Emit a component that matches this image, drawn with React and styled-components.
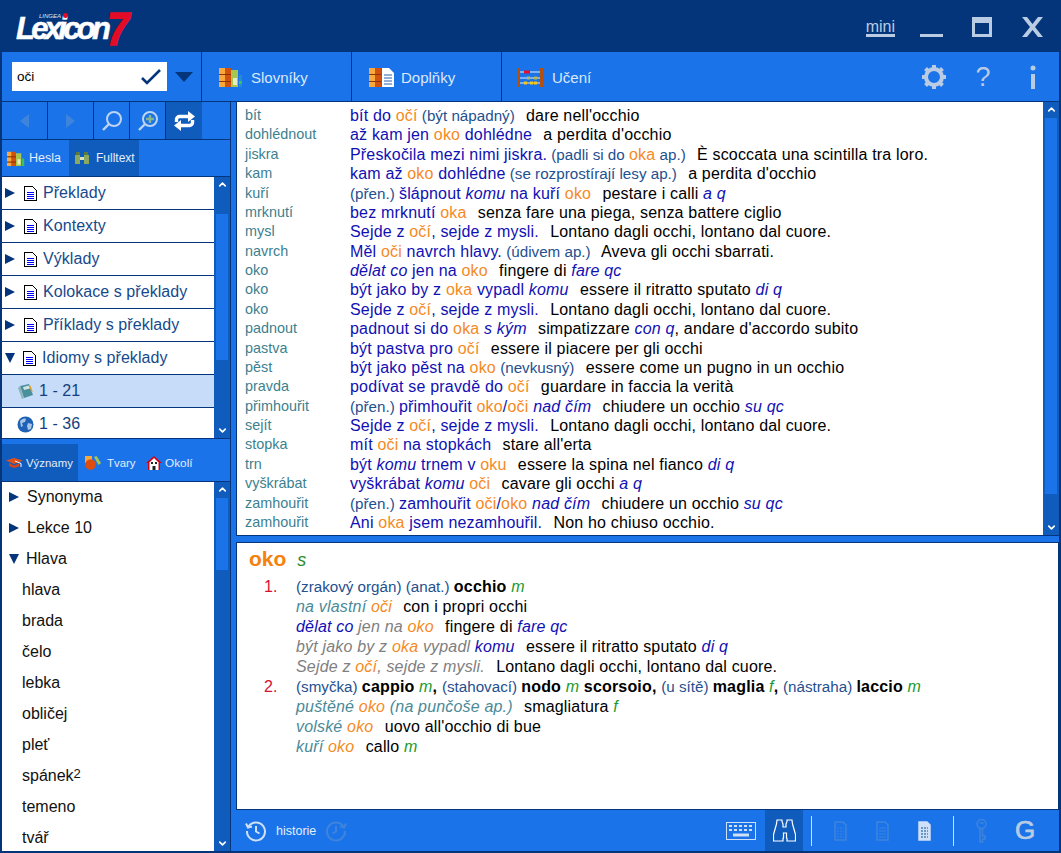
import React from "react";
import styled, { createGlobalStyle } from "styled-components";
import { FiChevronUp, FiChevronDown } from "react-icons/fi";

const NAVY = "#04357a";
const BLUE = "#1a73e8";
const ACTIVE = "#0f5cbd";
const PALE = "#b9cce4";

const GlobalStyle = createGlobalStyle`
  html, body {
    margin: 0;
    padding: 0;
    background: ${NAVY};
  }
  body {
    font-family: "Liberation Sans", Arial, sans-serif;
    overflow: hidden;
  }
`;

const Window = styled.div`
  width: 1061px;
  height: 853px;
  box-sizing: border-box;
  padding: 0 2px 2px;
  background: ${NAVY};
  display: flex;
  flex-direction: column;
`;

const TitleBar = styled.div`
  height: 52px;
  flex: none;
  display: flex;
  align-items: flex-start;
  justify-content: space-between;
`;

const Logo = styled.div`
  position: relative;
  margin: 11px 0 0 14px;
  padding-top: 9px;
  width: 116px;
  height: 18px;
  color: #fff;
  font: italic bold 31px/18px "Liberation Sans", sans-serif;
  letter-spacing: -3.7px;
  -webkit-text-stroke: 0.5px #fff;
`;

const LogoSmall = styled.span`
  position: absolute;
  left: 23px;
  top: 2px;
  font: italic 400 6px/7px "Liberation Sans", sans-serif;
  letter-spacing: 0;
  color: #dfe7f2;
  -webkit-text-stroke: 0;
`;

const LogoDot = styled.span`
  position: absolute;
  left: 47px;
  top: 2px;
  width: 5px;
  height: 5px;
  border-radius: 50%;
  background: #e30b25;
`;

const LogoSeven = styled.span`
  position: absolute;
  left: 91px;
  top: -2px;
  color: #e30b25;
  font: italic 900 47px/40px "Liberation Sans", sans-serif;
  letter-spacing: 0;
  -webkit-text-stroke: 1.5px #e30b25;
  transform: scaleX(0.85);
  transform-origin: left center;
`;

const WindowButtons = styled.div`
  display: flex;
  align-items: center;
  height: 52px;
  padding-top: 3px;
  box-sizing: border-box;
  margin-right: 15px;
  gap: 24px;
`;

const MiniLink = styled.span`
  color: ${PALE};
  font-size: 16px;
  border-bottom: 3px solid ${PALE};
  line-height: 15px;
  margin-right: -1px;
`;

const WinIcon = styled.svg`
  width: 24px;
  height: 24px;
  flex: none;
  margin-left: 2px;
  fill: ${PALE};
`;

const Toolbar = styled.div`
  height: 50px;
  flex: none;
  display: flex;
  box-sizing: border-box;
  background: ${BLUE};
  border-bottom: 1px solid ${NAVY};
`;

const SearchZone = styled.div`
  width: 200px;
  flex: none;
  display: flex;
  align-items: center;
  padding-left: 10px;
  box-sizing: border-box;
  border-right: 1px solid ${NAVY};
  gap: 8px;
`;

const SearchBox = styled.div`
  width: 155px;
  height: 29px;
  background: #fff;
  display: flex;
  align-items: center;
  justify-content: space-between;
  box-sizing: border-box;
  padding: 0 6px 0 5px;
  font-size: 13.5px;
  color: #000;
`;

const ToolTab = styled.div`
  width: 150px;
  box-sizing: border-box;
  border-right: ${(p) => (p.$last ? "none" : `1px solid ${NAVY}`)};
  display: flex;
  align-items: center;
  gap: ${(p) => p.$gap}px;
  padding: 1px 0 0 ${(p) => p.$pad}px;
  color: #dce8fa;
  font-size: 15px;
`;

const ToolSpacer = styled.div`
  flex: 1;
  display: flex;
  align-items: center;
  justify-content: flex-end;
  gap: 22px;
  padding-right: 12px;
`;

const Body = styled.div`
  flex: 1;
  min-height: 0;
  display: flex;
  background: ${BLUE};
`;

const LeftColumn = styled.div`
  width: 229px;
  flex: none;
  display: flex;
  flex-direction: column;
  border-right: 1px solid ${NAVY};
  box-sizing: border-box;
`;

const NavRow = styled.div`
  height: 38px;
  flex: none;
  display: flex;
  border-bottom: 1px solid ${NAVY};
  box-sizing: border-box;
`;

const NavCell = styled.div`
  width: ${(p) => p.$w}px;
  flex: none;
  box-sizing: border-box;
  display: flex;
  align-items: center;
  justify-content: center;
  border-right: ${(p) => (p.$plain ? "none" : `1px solid ${NAVY}`)};
  background: ${(p) => (p.$active ? ACTIVE : "transparent")};
`;

const SmallTabs = styled.div`
  flex: none;
  height: ${(p) => p.$h}px;
  display: flex;
  padding-top: ${(p) => p.$top || 0}px;
  box-sizing: border-box;
  border-bottom: 1px solid ${NAVY};
`;

const SmallTab = styled.div`
  box-sizing: border-box;
  width: ${(p) => p.$w}px;
  display: flex;
  align-items: center;
  padding-left: ${(p) => p.$pad}px;
  gap: ${(p) => p.$gap}px;
  color: #e4eefc;
  font-size: ${(p) => p.$size || 12}px;
  background: ${(p) => (p.$active ? ACTIVE : "transparent")};
`;

const ListWrap = styled.div`
  display: flex;
  min-height: 0;
  flex: ${(p) => (p.$grow ? 1 : "none")};
  height: ${(p) => (p.$h ? `${p.$h}px` : "auto")};
  border-bottom: ${(p) => (p.$grow ? "none" : `1px solid ${NAVY}`)};
  box-sizing: border-box;
`;

const List = styled.div`
  flex: 1;
  min-width: 0;
  background: #fff;
  overflow: hidden;
`;

const TreeRow = styled.div`
  height: 33px;
  box-sizing: border-box;
  border-bottom: 1px solid ${NAVY};
  display: flex;
  align-items: center;
  gap: ${(p) => p.$gap || 6}px;
  padding-left: ${(p) => p.$pad || 3}px;
  font-size: 16px;
  letter-spacing: 0.06px;
  color: ${(p) => (p.$sub ? "#143f7c" : "#174a8c")};
  background: ${(p) => (p.$selected ? "#c7dcf8" : "#fff")};
`;

const PlainRow = styled.div`
  height: 31px;
  display: flex;
  align-items: center;
  gap: 7px;
  padding-left: ${(p) => p.$pad}px;
  font-size: 16px;
  color: #111;

  &:first-child {
    height: 30px;
  }
`;

const Sup = styled.span`
  font-size: 13px;
  margin: -5px 0 0 -7px;
`;

const Triangle = styled.span`
  flex: none;
  width: 0;
  height: 0;
  ${(p) =>
    p.$open
      ? `border-left: 5.5px solid transparent; border-right: 5.5px solid transparent; border-top: 10px solid ${NAVY};`
      : `border-top: 5.5px solid transparent; border-bottom: 5.5px solid transparent; border-left: 10px solid ${NAVY}; margin-right: 1px;`}
`;

const ScrollTrack = styled.div`
  width: 16px;
  flex: none;
  display: flex;
  flex-direction: column;
  background: ${ACTIVE};
`;

const ScrollEnd = styled.div`
  height: 15px;
  flex: none;
  display: flex;
  align-items: center;
  justify-content: center;
  color: #fff;
`;

const ScrollThumbArea = styled.div`
  flex: 1;
  padding: ${(p) => p.$top || 1}px 2px 0;
`;

const ScrollThumb = styled.div`
  height: ${(p) => p.$h}px;
  background: ${BLUE};
`;

const RightColumn = styled.div`
  flex: 1;
  min-width: 0;
  display: flex;
  flex-direction: column;
  padding-left: 5px;
`;

const ResultsWrap = styled.div`
  height: 434px;
  flex: none;
  display: flex;
  box-sizing: border-box;
  border: 1px solid ${NAVY};
  border-top: none;
  border-right: none;
`;

const Results = styled.div`
  flex: 1;
  min-width: 0;
  background: #fff;
  padding: 4px 0 0 8px;
  overflow: hidden;
`;

const ResultRow = styled.div`
  display: flex;
  height: 19.38px;
  line-height: 19.38px;
  font-size: 16px;
  letter-spacing: 0.18px;
  white-space: pre;
`;

const Head = styled.div`
  width: 105px;
  flex: none;
  color: #3d7f8f;
  font-size: 14.4px;
  letter-spacing: 0;
`;

const Run = styled.span`
  color: ${(p) => p.$color};
  font-style: ${(p) => (p.$italic ? "italic" : "normal")};
  font-weight: ${(p) => (p.$bold ? 700 : 400)};
  font-size: ${(p) => (p.$small ? "15.2px" : "inherit")};
  letter-spacing: ${(p) => (p.$small ? "0" : "inherit")};
  margin-left: ${(p) => (p.$lead ? "2px" : "0")};
`;

const Detail = styled.div`
  flex: 1;
  min-height: 0;
  margin-top: 6px;
  background: #fff;
  border: 1px solid ${NAVY};
  box-sizing: border-box;
  padding: 4px 0 0 12px;
`;

const DetailTitle = styled.div`
  height: 30px;
  line-height: 24px;
  font-size: 21px;
  font-weight: 700;
  color: #f5810f;
  white-space: pre;
`;

const TitleGender = styled.span`
  font-size: 18px;
  font-weight: 400;
  font-style: italic;
  color: #2d8a2d;
  margin-left: 5px;
`;

const Sense = styled.div`
  display: flex;
  padding-left: 15px;
`;

const SenseNumber = styled.div`
  width: 32px;
  flex: none;
  color: #d81034;
  font-size: 16px;
  line-height: 20px;
`;

const SenseLine = styled.div`
  height: 20px;
  line-height: 20px;
  font-size: 16px;
  letter-spacing: 0.18px;
  white-space: pre;
`;

const BottomBar = styled.div`
  height: 41px;
  flex: none;
  display: flex;
  align-items: stretch;
  justify-content: space-between;
`;

const BottomGroup = styled.div`
  display: flex;
  align-items: center;
`;

const HistoryLabel = styled.span`
  color: #e4eefc;
  font-size: 12.5px;
  margin: 0 9px 0 1px;
`;

const BottomCell = styled.div`
  width: ${(p) => p.$w}px;
  height: 100%;
  flex: none;
  box-sizing: border-box;
  padding-right: ${(p) => p.$pr || 0}px;
  display: flex;
  align-items: center;
  justify-content: center;
  background: ${(p) => (p.$active ? ACTIVE : "transparent")};
`;

const Separator = styled.div`
  width: 1px;
  height: 30px;
  background: #cfe0f7;
  flex: none;
`;

const GLetter = styled.span`
  color: ${PALE};
  font-size: 26px;
  -webkit-text-stroke: 0.7px ${PALE};
`;

const HelpGlyph = styled.span`
  color: ${PALE};
  font-size: 27px;
  width: 28px;
  text-align: center;
  line-height: 30px;
`;

const DocSvg = styled.svg`
  flex: none;
  margin-left: 2px;
  shape-rendering: crispEdges;
`;

const BookStack = () => (
  <svg width="23" height="19" viewBox="0 0 23 19">
    <rect x="0" y="0" width="6" height="19" fill="#f9a83b" />
    <rect x="6" y="0" width="6" height="19" fill="#d1510f" />
    <rect x="0" y="6" width="12" height="1" fill="#8c3408" />
    <rect x="0" y="13" width="12" height="1" fill="#8c3408" />
    <rect x="12" y="2" width="7" height="17" fill="#a8c64e" />
    <rect x="14" y="10" width="4" height="7" fill="#e6ecc0" />
    <rect x="20" y="7" width="3" height="12" fill="#1f8fd0" />
    <rect x="20" y="13" width="3" height="3" fill="#3ec05a" />
  </svg>
);

const BookDoc = () => (
  <svg width="25" height="19" viewBox="0 0 25 19">
    <rect x="0" y="0" width="6" height="19" fill="#f9a83b" />
    <rect x="6" y="0" width="6" height="19" fill="#d1510f" />
    <rect x="0" y="6" width="12" height="1" fill="#8c3408" />
    <rect x="0" y="13" width="12" height="1" fill="#8c3408" />
    <path d="M13 0h7l5 5v14H13z" fill="#fff" />
    <path d="M15 7h8M15 10h8M15 13h8M15 16h8" stroke="#2a5fb0" strokeWidth="1" />
  </svg>
);

const SmallBooks = () => (
  <svg width="18" height="15" viewBox="0 0 24 20">
    <rect x="0" y="1" width="6" height="19" fill="#f9a83b" />
    <rect x="6" y="1" width="6" height="19" fill="#d1510f" />
    <rect x="0" y="7" width="12" height="1.500" fill="#8c3408" />
    <rect x="0" y="14" width="12" height="1.500" fill="#8c3408" />
    <rect x="12" y="3" width="7" height="17" fill="#a8c64e" />
    <rect x="14" y="11" width="4" height="7" fill="#e6ecc0" />
    <rect x="20" y="10" width="3" height="10" fill="#3ec05a" />
  </svg>
);

const Binoculars = () => (
  <svg width="14" height="14" viewBox="0 0 14 14">
    <rect x="1" y="1" width="4" height="3" fill="#5c7a3a" />
    <rect x="9" y="1" width="4" height="3" fill="#5c7a3a" />
    <rect x="0" y="4" width="5" height="9" fill="#8aa860" />
    <rect x="9" y="4" width="5" height="9" fill="#8aa860" />
    <rect x="5" y="6" width="4" height="3" fill="#d8e0c0" />
  </svg>
);

const Abacus = () => (
  <svg width="26" height="19" viewBox="0 0 26 19">
    <rect x="0" y="0" width="3" height="19" fill="#b4500f" />
    <rect x="23" y="0" width="3" height="19" fill="#b4500f" />
    <path d="M3 4h20M3 10h20M3 15h20" stroke="#e8eef8" strokeWidth="1" />
    <rect x="7" y="2.500" width="3" height="3" fill="#e01030" />
    <rect x="10" y="2.500" width="3" height="3" fill="#e01030" />
    <rect x="10" y="8.500" width="3" height="3" fill="#b7b94a" />
    <rect x="17" y="8.500" width="3" height="3" fill="#b7b94a" />
    <rect x="7" y="13.500" width="3" height="3" fill="#f5c518" />
    <rect x="13" y="13.500" width="3" height="3" fill="#f5c518" />
    <rect x="17" y="13.500" width="3" height="3" fill="#f5c518" />
  </svg>
);

const DocIcon = () => (
  <DocSvg width="13" height="15" viewBox="0 0 13 15">
    <path d="M.5.5h8l4 4v10H.5z" fill="#fff" stroke="#000" />
    <path d="M3 6h7M3 8h7M3 10h7M3 12h7" stroke="#0000ff" />
  </DocSvg>
);

const NoteIcon = () => (
  <svg width="17" height="17" viewBox="0 0 17 17">
    <path d="M3 3l9-2 4 11-9 3z" fill="#4a8f9c" />
    <path d="M3 3l4 12-2 1-4-11z" fill="#8fb4bc" />
    <path d="M6 4l6-1.500 1 3-6 1.500z" fill="#cfe2e6" />
    <path d="M13 3l2 6" stroke="#e0a020" strokeWidth="1.400" />
  </svg>
);

const GlobeIcon = () => (
  <svg width="17" height="17" viewBox="0 0 17 17">
    <circle cx="8.500" cy="8.500" r="8" fill="#1f62b5" />
    <path d="M3 5c2-2 4-3 6-2l-1 3-3 1 1 3-2 1zM11 7l4 1-1 5-3 1-1-4z" fill="#a9c6e8" />
  </svg>
);

const Cap = () => (
  <svg width="17" height="12" viewBox="0 0 17 12">
    <path d="M0 3.500L8 1l9 2.500L8 7z" fill="#e0501a" />
    <path d="M3 6l5 2.500L13 6.500v3L8 11 3 9z" fill="#d8431a" />
    <path d="M9 4l6 2.500V10" stroke="#fff" fill="none" />
  </svg>
);

const Shapes = () => (
  <svg width="16" height="14" viewBox="0 0 16 14">
    <rect x="0" y="0" width="7" height="7" fill="#f5a93c" />
    <path d="M9 1l2.500-1 4.500 7-2.500 2z" fill="#a8c64e" />
    <circle cx="5.500" cy="8.500" r="5.300" fill="#dd4d12" />
  </svg>
);

const House = () => (
  <svg width="16" height="14" viewBox="0 0 16 14">
    <path d="M8 0l8 7h-2v7H2V7H0z" fill="#d80010" />
    <path d="M8 2l4.500 4.500V14h-9V6.500z" fill="#fff" />
    <rect x="5" y="6" width="2" height="2" fill="#222" />
    <rect x="9" y="6" width="2" height="2" fill="#222" />
    <rect x="6.500" y="10" width="3" height="4" fill="#222" />
  </svg>
);

const SearchGlyph = ({ plus }) => (
  <svg width="22" height="22" viewBox="0 0 22 22" fill="none" stroke="#bdd4f2" strokeWidth="2">
    <circle cx="13" cy="9" r="7" />
    <path d="M8 14L2 20" strokeWidth="2.400" />
    {plus && <path d="M13 5v8M9 9h8" stroke="#86b58c" strokeWidth="2.400" />}
  </svg>
);

const Repeat = () => (
  <svg width="21" height="20" viewBox="0 0 21 20" fill="#fff">
    <path d="M2.500 11V8.500a3 3 0 0 1 3-3H15" fill="none" stroke="#fff" strokeWidth="3.400" />
    <path d="M14 0l7 5.500-7 5.500z" />
    <path d="M18.500 9v2.500a3 3 0 0 1-3 3H6" fill="none" stroke="#fff" strokeWidth="3.400" />
    <path d="M7 9l-7 5.500L7 20z" />
  </svg>
);

const Gear = () => (
  <svg width="26" height="26" viewBox="0 0 26 26" fill="none" stroke={PALE}>
    <circle cx="13" cy="13" r="8" strokeWidth="4" />
    <path
      d="M13 1v4M13 21v4M1 13h4M21 13h4M4.500 4.500l3 3M18.500 18.500l3 3M21.500 4.500l-3 3M7.500 18.500l-3 3"
      strokeWidth="4"
    />
  </svg>
);

const HistoryClock = ({ faded, flip }) => (
  <svg
    width="22"
    height="22"
    viewBox="0 0 22 22"
    fill="none"
    stroke={faded ? "#3f84dc" : "#cfe0f7"}
    strokeWidth="2"
    transform={flip ? "scale(-1 1)" : undefined}
  >
    <path d="M3.500 6.500A9 9 0 1 1 2 11" />
    <path d="M1 3.500l2 4 4-1" />
    <path d="M11 6v5.500l3.500 2" />
  </svg>
);

const Keyboard = () => (
  <svg width="30" height="18" viewBox="0 0 30 18" fill="none">
    <rect x=".5" y=".5" width="29" height="17" stroke="#cfe0f7" />
    <path
      d="M3 4h3M8 4h3M13 4h3M18 4h3M23 4h3M3 8h3M8 8h3M13 8h3M18 8h3M23 8h3"
      stroke="#cfe0f7"
      strokeWidth="2"
    />
    <path d="M7 13h16" stroke="#cfe0f7" strokeWidth="3" />
  </svg>
);

const BigBinoculars = () => (
  <svg width="23" height="23" viewBox="0 0 23 23" fill="none" stroke="#fff" strokeWidth="1.200">
    <path d="M4 1h5v1.500L10 5v3h3V5l1-2.500V1h5l.5 4 1 3.500 2 7V22h-8.500v-2.500l-.5-.5v-5h-3v5l-.5.5V22H.5v-6.500l2-7L3.500 5z" />
  </svg>
);

const PageIcon = ({ color, dotted }) => (
  <svg width="13" height="20" viewBox="0 0 13 20" fill="none">
    <path d="M1 1h8l3 3v15H1z" stroke={color} strokeWidth="1.500" fill={dotted === "solid" ? "#cfe0f7" : "none"} />
    <path
      d="M3 7h7M3 10h7M3 13h7M3 16h7"
      stroke={dotted === "solid" ? "#0f4f9e" : color}
      strokeWidth="1"
      strokeDasharray={dotted ? "2 1" : "none"}
    />
  </svg>
);

const KeyIcon = () => (
  <svg width="11" height="24" viewBox="0 0 11 24" fill="none" stroke="#3f84dc" strokeWidth="1.500">
    <circle cx="5.500" cy="5" r="4.500" />
    <path d="M4 9v14l2.500 0V20H9v-3H6.500V9" />
    <path d="M3.500 4h4" />
  </svg>
);

const b = "#1010b4";
const o = "#f58a1f";
const n = "#24508f";
const t = "#000";
const seg = {
  k: { $color: b },
  o: { $color: o },
  n: { $color: n, $small: true },
  i: { $color: b, $italic: true },
  t: { $color: t },
};

const sejde = [
  ["k", "Sejde z "],
  ["o", "očí"],
  ["k", ", sejde z mysli."],
  ["t", "  Lontano dagli occhi, lontano dal cuore."],
];

const results = [
  ["bít", [["k", "bít do "], ["o", "očí"], ["n", " (být nápadný)"], ["t", "  dare nell'occhio"]]],
  ["dohlédnout", [["k", "až kam jen "], ["o", "oko"], ["k", " dohlédne"], ["t", "  a perdita d'occhio"]]],
  ["jiskra", [["k", "Přeskočila mezi nimi jiskra."], ["n", " (padli si do "], ["o", "oka"], ["n", " ap.)"], ["t", "  È scoccata una scintilla tra loro."]]],
  ["kam", [["k", "kam až "], ["o", "oko"], ["k", " dohlédne"], ["n", " (se rozprostírají lesy ap.)"], ["t", "  a perdita d'occhio"]]],
  ["kuří", [["n", "(přen.) "], ["k", "šlápnout "], ["i", "komu"], ["k", " na kuří "], ["o", "oko"], ["t", "  pestare i calli "], ["i", "a q"]]],
  ["mrknutí", [["k", "bez mrknutí "], ["o", "oka"], ["t", "  senza fare una piega, senza battere ciglio"]]],
  ["mysl", sejde],
  ["navrch", [["k", "Měl "], ["o", "oči"], ["k", " navrch hlavy."], ["n", " (údivem ap.)"], ["t", "  Aveva gli occhi sbarrati."]]],
  ["oko", [["i", "dělat co"], ["k", " jen na "], ["o", "oko"], ["t", "  fingere di "], ["i", "fare qc"]]],
  ["oko", [["k", "být jako by z "], ["o", "oka"], ["k", " vypadl "], ["i", "komu"], ["t", "  essere il ritratto sputato "], ["i", "di q"]]],
  ["oko", sejde],
  ["padnout", [["k", "padnout si do "], ["o", "oka"], ["i", " s kým"], ["t", "  simpatizzare "], ["i", "con q"], ["t", ", andare d'accordo subito"]]],
  ["pastva", [["k", "být pastva pro "], ["o", "očí"], ["t", "  essere il piacere per gli occhi"]]],
  ["pěst", [["k", "být jako pěst na "], ["o", "oko"], ["n", " (nevkusný)"], ["t", "  essere come un pugno in un occhio"]]],
  ["pravda", [["k", "podívat se pravdě do "], ["o", "očí"], ["t", "  guardare in faccia la verità"]]],
  ["přimhouřit", [["n", "(přen.) "], ["k", "přimhouřit "], ["o", "oko"], ["k", "/"], ["o", "oči"], ["i", " nad čím"], ["t", "  chiudere un occhio "], ["i", "su qc"]]],
  ["sejít", sejde],
  ["stopka", [["k", "mít "], ["o", "oči"], ["k", " na stopkách"], ["t", "  stare all'erta"]]],
  ["trn", [["k", "být "], ["i", "komu"], ["k", " trnem v "], ["o", "oku"], ["t", "  essere la spina nel fianco "], ["i", "di q"]]],
  ["vyškrábat", [["k", "vyškrábat "], ["i", "komu"], ["k", " "], ["o", "oči"], ["t", "  cavare gli occhi "], ["i", "a q"]]],
  ["zamhouřit", [["n", "(přen.) "], ["k", "zamhouřit "], ["o", "oči"], ["k", "/"], ["o", "oko"], ["i", " nad čím"], ["t", "  chiudere un occhio "], ["i", "su qc"]]],
  ["zamhouřit", [["k", "Ani "], ["o", "oka"], ["k", " jsem nezamhouřil."], ["t", "  Non ho chiuso occhio."]]],
];

const dseg = {
  n: { $color: n, $small: true },
  b: { $color: "#000", $bold: true },
  g: { $color: "#1e9a2e", $italic: true },
  s: { $color: "#4a8a98", $italic: true },
  y: { $color: "#808080", $italic: true },
  o: { $color: o, $italic: true },
  i: { $color: b, $italic: true },
  t: { $color: "#000" },
};

const sense1 = [
  [["n", "(zrakový orgán) (anat.) "], ["b", "occhio"], ["g", " m"]],
  [["s", "na vlastní "], ["o", "oči"], ["t", "  con i propri occhi"]],
  [["i", "dělat co"], ["y", " jen na "], ["o", "oko"], ["t", "  fingere di "], ["i", "fare qc"]],
  [["y", "být jako by z "], ["o", "oka"], ["y", " vypadl "], ["i", "komu"], ["t", "  essere il ritratto sputato "], ["i", "di q"]],
  [["y", "Sejde z "], ["o", "očí"], ["y", ", sejde z mysli."], ["t", "  Lontano dagli occhi, lontano dal cuore."]],
];

const sense2 = [
  [["n", "(smyčka) "], ["b", "cappio"], ["g", " m"], ["b", ", "], ["n", "(stahovací) "], ["b", "nodo"], ["g", " m "], ["b", "scorsoio, "], ["n", "(u sítě) "], ["b", "maglia"], ["g", " f"], ["b", ", "], ["n", "(nástraha) "], ["b", "laccio"], ["g", " m"]],
  [["s", "puštěné "], ["o", "oko"], ["s", " (na punčoše ap.)"], ["t", "  smagliatura "], ["g", "f"]],
  [["s", "volské "], ["o", "oko"], ["t", "  uovo all'occhio di bue"]],
  [["s", "kuří "], ["o", "oko"], ["t", "  callo "], ["g", "m"]],
];

const Runs = ({ parts, map }) =>
  parts.map(([kind, text], i) => (
    <Run key={i} {...map[kind]} $lead={text.startsWith("  ")}>
      {text}
    </Run>
  ));

const treeRows = ["Překlady", "Kontexty", "Výklady", "Kolokace s překlady", "Příklady s překlady"];
const words = ["hlava", "brada", "čelo", "lebka", "obličej", "pleť"];

function App() {
  return (
    <Window>
      <GlobalStyle />
      <TitleBar>
        <Logo>
          Lexicon
          <LogoSmall>LINGEA</LogoSmall>
          <LogoDot />
          <LogoSeven>7</LogoSeven>
        </Logo>
        <WindowButtons>
          <MiniLink>mini</MiniLink>
          <WinIcon viewBox="0 0 24 24">
            <rect x="0" y="18" width="23" height="3" />
          </WinIcon>
          <WinIcon viewBox="0 0 24 24">
            <path d="M2 1h20v20H2zM5 7v11h14V7z" fillRule="evenodd" />
          </WinIcon>
          <WinIcon viewBox="0 0 24 24">
            <path d="M2 1h5l5.500 7L18 1h5l-8 10 8 10h-5l-5.500-7L7 21H2l8-10z" />
          </WinIcon>
        </WindowButtons>
      </TitleBar>

      <Toolbar>
        <SearchZone>
          <SearchBox>
            oči
            <svg width="20" height="16" viewBox="0 0 20 16" fill="none" stroke={NAVY} strokeWidth="2.600">
              <path d="M1 9l5 5L19 1" />
            </svg>
          </SearchBox>
          <svg width="18" height="10" viewBox="0 0 18 10" fill={NAVY}>
            <path d="M0 0h18L9 10z" />
          </svg>
        </SearchZone>
        <ToolTab $pad={17} $gap={9}>
          <BookStack />
          Slovníky
        </ToolTab>
        <ToolTab $pad={17} $gap={7}>
          <BookDoc />
          Doplňky
        </ToolTab>
        <ToolTab $pad={15} $gap={9} $last>
          <Abacus />
          Učení
        </ToolTab>
        <ToolSpacer>
          <Gear />
          <HelpGlyph>?</HelpGlyph>
          <svg width="28" height="26" viewBox="0 0 28 26" fill={PALE}>
            <circle cx="14" cy="4" r="2.500" />
            <rect x="12" y="10" width="4" height="15" />
          </svg>
        </ToolSpacer>
      </Toolbar>

      <Body>
        <LeftColumn>
          <NavRow>
            <NavCell $w={46}>
              <svg width="9" height="14" viewBox="0 0 9 14" fill="#3f84dc">
                <path d="M9 0v14L0 7z" />
              </svg>
            </NavCell>
            <NavCell $w={46}>
              <svg width="9" height="14" viewBox="0 0 9 14" fill="#3f84dc">
                <path d="M0 0v14l9-7z" />
              </svg>
            </NavCell>
            <NavCell $w={36}>
              <SearchGlyph />
            </NavCell>
            <NavCell $w={36}>
              <SearchGlyph plus />
            </NavCell>
            <NavCell $w={36} $active $plain>
              <Repeat />
            </NavCell>
            <NavCell $w={28} $plain />
          </NavRow>
          <SmallTabs $h={37}>
            <SmallTab $w={67} $pad={5} $gap={4} $size={12.5}>
              <SmallBooks />
              Hesla
            </SmallTab>
            <SmallTab $w={70} $pad={6} $gap={7} $active>
              <Binoculars />
              Fulltext
            </SmallTab>
          </SmallTabs>
          <ListWrap $h={262}>
            <List>
              {treeRows.map((label) => (
                <TreeRow key={label}>
                  <Triangle />
                  <DocIcon />
                  {label}
                </TreeRow>
              ))}
              <TreeRow>
                <Triangle $open />
                <DocIcon />
                Idiomy s překlady
              </TreeRow>
              <TreeRow $pad={15} $gap={5} $sub $selected>
                <NoteIcon />1 - 21
              </TreeRow>
              <TreeRow $pad={15} $gap={5} $sub>
                <GlobeIcon />1 - 36
              </TreeRow>
            </List>
            <ScrollTrack>
              <ScrollEnd>
                <FiChevronUp strokeWidth={3.500} size={11} />
              </ScrollEnd>
              <ScrollThumbArea $top={22}>
                <ScrollThumb $h={146} />
              </ScrollThumbArea>
              <ScrollEnd>
                <FiChevronDown strokeWidth={3.500} size={11} />
              </ScrollEnd>
            </ScrollTrack>
          </ListWrap>
          <SmallTabs $h={43} $top={5}>
            <SmallTab $w={76} $pad={4} $gap={3} $size={11.4} $active>
              <Cap />
              Významy
            </SmallTab>
            <SmallTab $w={66} $pad={7} $gap={6} $size={11.4}>
              <Shapes />
              Tvary
            </SmallTab>
            <SmallTab $w={60} $pad={2} $gap={3} $size={11.8}>
              <House />
              Okolí
            </SmallTab>
          </SmallTabs>
          <ListWrap $grow>
            <List>
              <PlainRow $pad={7}>
                <Triangle />
                Synonyma
              </PlainRow>
              <PlainRow $pad={7}>
                <Triangle />
                Lekce 10
              </PlainRow>
              <PlainRow $pad={7}>
                <Triangle $open />
                Hlava
              </PlainRow>
              {words.map((w) => (
                <PlainRow key={w} $pad={20}>
                  {w}
                </PlainRow>
              ))}
              <PlainRow $pad={20}>
                spánek
                <Sup>2</Sup>
              </PlainRow>
              <PlainRow $pad={20}>temeno</PlainRow>
              <PlainRow $pad={20}>tvář</PlainRow>
            </List>
            <ScrollTrack>
              <ScrollEnd>
                <FiChevronUp strokeWidth={3.500} size={11} />
              </ScrollEnd>
              <ScrollThumbArea>
                <ScrollThumb $h={72} />
              </ScrollThumbArea>
              <ScrollEnd>
                <FiChevronDown strokeWidth={3.500} size={11} />
              </ScrollEnd>
            </ScrollTrack>
          </ListWrap>
        </LeftColumn>

        <RightColumn>
          <ResultsWrap>
            <Results>
              {results.map(([head, parts], i) => (
                <ResultRow key={i}>
                  <Head>{head}</Head>
                  <div>
                    <Runs parts={parts} map={seg} />
                  </div>
                </ResultRow>
              ))}
            </Results>
            <ScrollTrack>
              <ScrollEnd>
                <FiChevronUp strokeWidth={3.500} size={11} />
              </ScrollEnd>
              <ScrollThumbArea>
                <ScrollThumb $h={376} />
              </ScrollThumbArea>
              <ScrollEnd>
                <FiChevronDown strokeWidth={3.500} size={11} />
              </ScrollEnd>
            </ScrollTrack>
          </ResultsWrap>
          <Detail>
            <DetailTitle>
              oko <TitleGender>s</TitleGender>
            </DetailTitle>
            <Sense>
              <SenseNumber>1.</SenseNumber>
              <div>
                {sense1.map((parts, i) => (
                  <SenseLine key={i}>
                    <Runs parts={parts} map={dseg} />
                  </SenseLine>
                ))}
              </div>
            </Sense>
            <Sense>
              <SenseNumber>2.</SenseNumber>
              <div>
                {sense2.map((parts, i) => (
                  <SenseLine key={i}>
                    <Runs parts={parts} map={dseg} />
                  </SenseLine>
                ))}
              </div>
            </Sense>
          </Detail>
          <BottomBar>
            <BottomGroup>
              <BottomCell $w={39}>
                <HistoryClock />
              </BottomCell>
              <HistoryLabel>historie</HistoryLabel>
              <HistoryClock faded flip />
            </BottomGroup>
            <BottomGroup>
              <BottomCell $w={45} $pr={4}>
                <Keyboard />
              </BottomCell>
              <BottomCell $w={38} $active>
                <BigBinoculars />
              </BottomCell>
              <BottomCell $w={8} />
              <Separator />
              <BottomCell $w={56}>
                <PageIcon color="#3f84dc" dotted="1" />
              </BottomCell>
              <BottomCell $w={28}>
                <PageIcon color="#3f84dc" />
              </BottomCell>
              <BottomCell $w={57}>
                <PageIcon color="#cfe0f7" dotted="solid" />
              </BottomCell>
              <Separator />
              <BottomCell $w={55}>
                <KeyIcon />
              </BottomCell>
              <BottomCell $w={32}>
                <GLetter>G</GLetter>
              </BottomCell>
              <BottomCell $w={18} />
            </BottomGroup>
          </BottomBar>
        </RightColumn>
      </Body>
    </Window>
  );
}

export default App;
